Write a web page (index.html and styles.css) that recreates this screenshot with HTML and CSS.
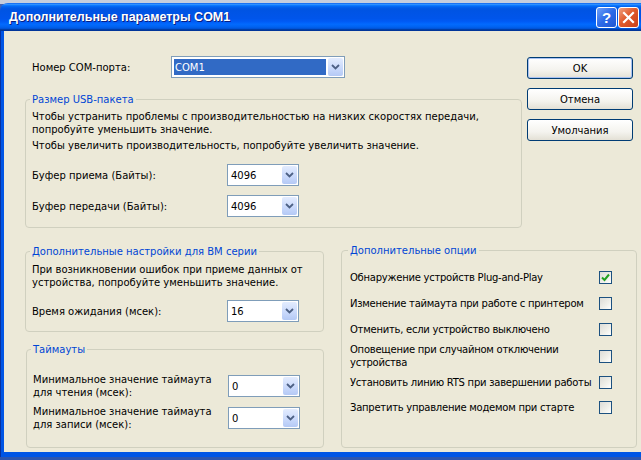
FILE: index.html
```html
<!DOCTYPE html>
<html lang="ru">
<head>
<meta charset="utf-8">
<title>Дополнительные параметры COM1</title>
<link rel="stylesheet" href="styles.css">
</head>
<body>
<div class="window">
  <div class="titlebar">
    <span class="title">Дополнительные параметры COM1</span>
    <div class="tb-buttons">
      <span class="tb-btn help">?</span>
      <span class="tb-btn close"><svg width="13" height="13" viewBox="0 0 13 13"><path d="M2 2 L11 11 M11 2 L2 11" stroke="#fff" stroke-width="2.2" stroke-linecap="square"/></svg></span>
    </div>
  </div>
  <div class="frame">
    <div class="client">
      <div class="top">
        <div class="main">
          <div class="com-row">
            <span class="com-label">Номер COM-порта:</span>
            <div class="combo com">
              <span class="val sel">COM1</span>
              <span class="drop"><svg width="9" height="6" viewBox="0 0 9 6"><path d="M1 1 L4.5 4.5 L8 1" fill="none" stroke="#4D6185" stroke-width="1.8"/></svg></span>
            </div>
          </div>
          <fieldset class="group usb">
            <legend>Размер USB-пакета</legend>
            <p>Чтобы устранить проблемы с производительностью на низких скоростях передачи,<br>попробуйте уменьшить значение.</p>
            <p class="p2">Чтобы увеличить производительность, попробуйте увеличить значение.</p>
            <div class="field f-first">
              <span class="flabel">Буфер приема (Байты):</span>
              <div class="combo"><span class="val">4096</span><span class="drop"><svg width="9" height="6" viewBox="0 0 9 6"><path d="M1 1 L4.5 4.5 L8 1" fill="none" stroke="#4D6185" stroke-width="1.8"/></svg></span></div>
            </div>
            <div class="field f-next">
              <span class="flabel">Буфер передачи (Байты):</span>
              <div class="combo"><span class="val">4096</span><span class="drop"><svg width="9" height="6" viewBox="0 0 9 6"><path d="M1 1 L4.5 4.5 L8 1" fill="none" stroke="#4D6185" stroke-width="1.8"/></svg></span></div>
            </div>
          </fieldset>
        </div>
        <div class="buttons">
          <button class="btn default">OK</button>
          <button class="btn">Отмена</button>
          <button class="btn">Умолчания</button>
        </div>
      </div>
      <div class="bottom">
        <div class="left-col">
          <fieldset class="group bm">
            <legend>Дополнительные настройки для BM серии</legend>
            <p>При возникновении ошибок при приеме данных от<br>устройства, попробуйте уменьшить значение.</p>
            <div class="field f-time">
              <span class="flabel">Время ожидания (мсек):</span>
              <div class="combo"><span class="val">16</span><span class="drop"><svg width="9" height="6" viewBox="0 0 9 6"><path d="M1 1 L4.5 4.5 L8 1" fill="none" stroke="#4D6185" stroke-width="1.8"/></svg></span></div>
            </div>
          </fieldset>
          <fieldset class="group timeouts">
            <legend>Таймауты</legend>
            <div class="field f-to1">
              <span class="flabel">Минимальное значение таймаута<br>для чтения (мсек):</span>
              <div class="combo"><span class="val">0</span><span class="drop"><svg width="9" height="6" viewBox="0 0 9 6"><path d="M1 1 L4.5 4.5 L8 1" fill="none" stroke="#4D6185" stroke-width="1.8"/></svg></span></div>
            </div>
            <div class="field f-to2">
              <span class="flabel">Минимальное значение таймаута<br>для записи (мсек):</span>
              <div class="combo"><span class="val">0</span><span class="drop"><svg width="9" height="6" viewBox="0 0 9 6"><path d="M1 1 L4.5 4.5 L8 1" fill="none" stroke="#4D6185" stroke-width="1.8"/></svg></span></div>
            </div>
          </fieldset>
        </div>
        <fieldset class="group options">
          <legend>Дополнительные опции</legend>
          <div class="opt h26"><span class="olabel">Обнаружение устройств Plug-and-Play</span><span class="check on"><svg width="9" height="9" viewBox="0 0 9 9"><path d="M1 4.5 L3.5 7 L8 1.5" fill="none" stroke="#21A121" stroke-width="2"/></svg></span></div>
          <div class="opt h26"><span class="olabel">Изменение таймаута при работе с принтером</span><span class="check"></span></div>
          <div class="opt h26"><span class="olabel">Отменить, если устройство выключено</span><span class="check"></span></div>
          <div class="opt h28"><span class="olabel">Оповещение при случайном отключении<br>устройства</span><span class="check"></span></div>
          <div class="opt h25"><span class="olabel">Установить линию RTS при завершении работы</span><span class="check"></span></div>
          <div class="opt h25"><span class="olabel">Запретить управление модемом при старте</span><span class="check"></span></div>
        </fieldset>
      </div>
    </div>
  </div>
</div>
</body>
</html>
```

FILE: styles.css
```css
html, body {
  margin: 0;
  padding: 0;
  overflow: hidden;
}
body {
  width: 641px;
  height: 460px;
  background: linear-gradient(180deg, #C5CDDD 0, #C5CDDD 4px, #3F62B4 4px, #2D55AE 100%);
  font-family: "DejaVu Sans", Verdana, sans-serif;
  font-size: 10px;
  color: #000;
}
.window {
  width: 680px;
  margin-top: 3px;
  border-radius: 8px 8px 0 0;
  overflow: hidden;
}
.titlebar {
  height: 28px;
  display: flex;
  align-items: center;
  background: linear-gradient(180deg, #0058EE 0%, #3593FF 4%, #288EFF 6%, #127DFF 8%, #036FFC 10%, #0262EE 14%, #0057E5 20%, #0054E3 24%, #0055EB 56%, #005BF5 66%, #026AFE 76%, #0062EF 86%, #0052D6 92%, #0040AB 94%, #003092 100%);
}
.title {
  padding-left: 9px;
  font-family: "Liberation Sans", Arial, sans-serif;
  font-weight: bold;
  font-size: 12.5px;
  color: #fff;
  text-shadow: 1px 1px 0 #0A1E80;
  flex: 1;
  white-space: nowrap;
}
.tb-buttons {
  display: flex;
  gap: 1px;
  width: 84px;
  padding-top: 1px;
}
.tb-btn {
  width: 19px;
  height: 19px;
  border: 1px solid #fff;
  border-radius: 3px;
  display: flex;
  align-items: center;
  justify-content: center;
  color: #fff;
  font-family: "Liberation Sans", sans-serif;
  font-weight: bold;
  font-size: 15px;
}
.help {
  background: linear-gradient(135deg, #6FA0F8 0%, #2C6AE8 50%, #1E56D2 100%);
}
.close {
  background: linear-gradient(135deg, #F0A080 0%, #E05A2C 45%, #C9401A 100%);
}
.frame {
  background: #0055E5;
  padding: 0 4px 5px 4px;
  box-shadow: inset 1px 0 0 #0831A0;
}
.client {
  background: #ECE9D8;
  height: 421px;
  padding-left: 21px;
  box-sizing: border-box;
  white-space: nowrap;
}
.top {
  display: flex;
}
.main {
  width: 497px;
}
.com-row {
  margin-top: 25px;
  padding-left: 7px;
  display: flex;
  align-items: center;
  height: 22px;
}
.com-label {
  width: 139px;
}
.combo {
  width: 72px;
  height: 22px;
  box-sizing: border-box;
  border: 1px solid #7F9DB9;
  background: #fff;
  display: flex;
  align-items: stretch;
}
.combo.com {
  width: 174px;
}
.val {
  flex: 1;
  padding-left: 3px;
  display: flex;
  align-items: center;
}
.val.sel {
  background: #316AC5;
  color: #fff;
  margin: 2px 1px 2px 2px;
  padding-left: 1px;
}
.drop {
  width: 15px;
  margin: 1px;
  border-radius: 2px;
  background: linear-gradient(180deg, #E3ECFE 0%, #C8D8FB 60%, #B4C9F5 100%);
  display: flex;
  align-items: center;
  justify-content: center;
}
fieldset.group {
  margin: 0;
  min-width: 0;
  box-sizing: border-box;
  border: 1px solid #D0D0BF;
  border-radius: 4px;
}
.group legend {
  color: #0046D5;
  padding: 0 2px;
  margin-left: -2px;
  line-height: 13px;
}
.group p {
  margin: 0;
  line-height: 13px;
}
fieldset.usb {
  width: 497px;
  margin-top: 15px;
  padding: 4px 0 10px 6px;
}
.usb .p2 {
  margin-top: 3px;
}
.field {
  display: flex;
  align-items: center;
}
.flabel {
  width: 195px;
  line-height: 13px;
}
.f-first { margin-top: 12px; }
.f-next { margin-top: 9px; }
.buttons {
  margin-left: 5px;
  margin-top: 26px;
  display: flex;
  flex-direction: column;
  gap: 9px;
}
.btn {
  width: 106px;
  height: 22px;
  box-sizing: border-box;
  border: 1px solid #003C74;
  border-radius: 3px;
  background: linear-gradient(180deg, #FFFFFF 0%, #F4F3EE 60%, #E3E0D5 100%);
  font-family: inherit;
  font-size: 10px;
  color: #000;
  padding: 0;
}
.btn.default {
  box-shadow: inset 0 0 0 1px #A9C2F2;
}
.bottom {
  display: flex;
  margin-top: 16px;
}
.left-col {
  width: 299px;
  display: flex;
  flex-direction: column;
}
fieldset.bm {
  margin-top: 1px;
  padding: 5px 0 9px 6px;
}
.f-time { margin-top: 11px; }
fieldset.timeouts {
  margin-top: 11px;
  margin-left: 1px;
  padding: 17px 0 16px 6px;
}
.f-to2 { margin-top: 6px; }
fieldset.options {
  width: 296px;
  margin-left: 17px;
  padding: 7px 0 0 8px;
}
.opt {
  display: flex;
  align-items: center;
}
.h26 { height: 26px; }
.h28 { height: 28px; }
.h25 { height: 25px; }
.olabel {
  width: 249px;
  line-height: 13px;
  letter-spacing: -0.25px;
}
.check {
  width: 13px;
  height: 13px;
  box-sizing: border-box;
  border: 1px solid #1C5180;
  background: linear-gradient(135deg, #DCDCD7 0%, #F0F0EA 60%, #FFFFFF 100%);
  display: flex;
  align-items: center;
  justify-content: center;
}
```
